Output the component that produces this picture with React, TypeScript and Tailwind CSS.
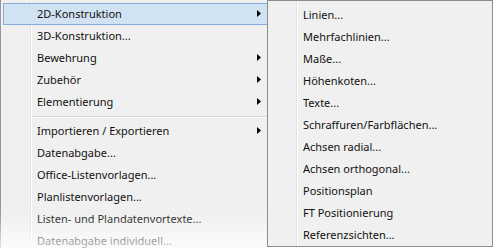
const mainItems = [
  { label: '2D-Konstruktion', sub: true, active: true },
  { label: '3D-Konstruktion...' },
  { label: 'Bewehrung', sub: true },
  { label: 'Zubehör', sub: true },
  { label: 'Elementierung', sub: true },
  { sep: true },
  { label: 'Importieren / Exportieren', sub: true },
  { label: 'Datenabgabe...' },
  { label: 'Office-Listenvorlagen...' },
  { label: 'Planlistenvorlagen...' },
  { label: 'Listen- und Plandatenvortexte...' },
  { label: 'Datenabgabe individuell...' },
];

const subItems = [
  'Linien...',
  'Mehrfachlinien...',
  'Maße...',
  'Höhenkoten...',
  'Texte...',
  'Schraffuren/Farbflächen...',
  'Achsen radial...',
  'Achsen orthogonal...',
  'Positionsplan',
  'FT Positionierung',
  'Referenzsichten...',
];

function Arrow() {
  return (
    <svg width="4" height="7" viewBox="0 0 4 7" className="shrink-0">
      <path d="M0 0 L4 3.5 L0 7 Z" fill="#000" />
    </svg>
  );
}

export default function App() {
  return (
    <div
      className="relative h-[248px] w-[494px] overflow-hidden bg-white text-[11px] text-[#111]"
      style={{ fontFamily: '"Noto Sans", "Open Sans", sans-serif' }}
    >
      {/* main menu */}
      <div className="relative h-[260px] w-[272px] border-l border-[#979797] bg-[#f0f0f0] px-[2px] pt-[3px]">
        <div className="absolute bottom-0 left-[29px] top-0 w-[2px] border-l border-[#e2e3e3] bg-white" />
        {mainItems.map((it, i) =>
          it.sep ? (
            <div key={i} className="relative flex h-[7px] items-center pl-[30px]">
              <div className="h-[2px] w-full border-t border-[#d7d7d7] bg-white" />
            </div>
          ) : (
            <div
              key={i}
              className={`relative flex h-[22px] items-center justify-between pb-[1px] pl-[33px] pr-[8px] ${
                it.active ? 'border border-[#84acdd] bg-[#d1e2f2]' : 'border border-transparent'
              }`}
            >
              <span className="leading-none">{it.label}</span>
              {it.sub && <Arrow />}
            </div>
          )
        )}
        <div className="pointer-events-none absolute inset-x-[-1px] top-[212px] h-[48px] bg-gradient-to-b from-white/0 to-white/95" />
      </div>

      {/* submenu */}
      <div className="absolute left-[267px] top-0 h-[247px] w-[226px] border border-[#8c8c8c] bg-[#f0f0f0] px-[2px] pt-[3px]">
        <div className="absolute bottom-0 left-[28px] top-0 w-[2px] border-l border-[#e2e3e3] bg-white" />
        {subItems.map((s) => (
          <div key={s} className="relative flex h-[22px] items-center pb-[1px] pl-[33px]">
            <span className="leading-none">{s}</span>
          </div>
        ))}
      </div>
    </div>
  );
}
